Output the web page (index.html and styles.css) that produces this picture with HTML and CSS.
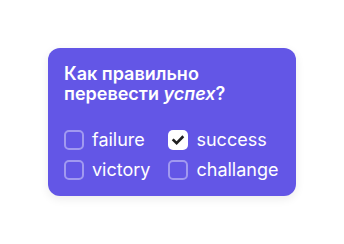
FILE: index.html
```html
<!DOCTYPE html>
<html lang="ru">
<head>
<meta charset="utf-8">
<link rel="stylesheet" href="styles.css">
</head>
<body>
<div class="card">
  <div class="title">Как правильно перевести <em>успех</em>?</div>
  <div class="options">
    <label class="opt"><span class="box"></span><span class="text">failure</span></label>
    <label class="opt"><span class="box checked"><svg viewBox="0 0 20 20" width="20" height="20"><path d="M5.6 10.3 L8.6 13.2 L14.4 7.2" fill="none" stroke="#1f1f1f" stroke-width="2.6" stroke-linecap="square" stroke-linejoin="miter"/></svg></span><span class="text">success</span></label>
    <label class="opt"><span class="box"></span><span class="text">victory</span></label>
    <label class="opt"><span class="box"></span><span class="text">challange</span></label>
  </div>
</div>
</body>
</html>
```

FILE: styles.css
```css
html, body {
  margin: 0;
  background: #ffffff;
}
body {
  padding: 48px;
  font-family: Inter, "Noto Sans", sans-serif;
}
.card {
  width: 248px;
  box-sizing: border-box;
  padding: 16px;
  background: #6356e6;
  border-radius: 12px;
  box-shadow: 0 3px 10px rgba(0, 0, 0, 0.08);
  color: #ffffff;
}
.title {
  font-size: 18px;
  font-weight: 600;
  line-height: 20px;
  width: 200px;
}
.title em {
  font-style: italic;
}
.options {
  margin-top: 26px;
  display: grid;
  grid-template-columns: auto auto;
  justify-content: start;
  column-gap: 18px;
  row-gap: 10px;
}
.opt {
  display: flex;
  align-items: center;
  gap: 8px;
  height: 20px;
}
.box {
  width: 20px;
  height: 20px;
  box-sizing: border-box;
  border: 2px solid rgba(255, 255, 255, 0.4);
  border-radius: 5px;
  flex: none;
}
.box.checked {
  background: #ffffff;
  border: none;
}
.box svg {
  display: block;
}
.text {
  font-size: 18px;
  line-height: 20px;
}
```
